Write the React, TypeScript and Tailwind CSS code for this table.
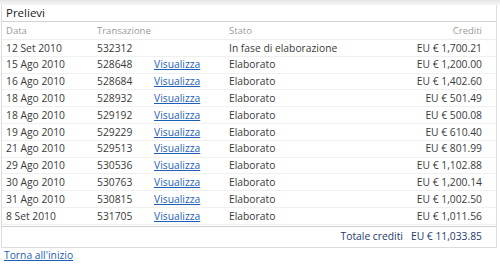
import React from "react";

const rows = [
  ["12 Set 2010", "532312", false, "In fase di elaborazione", "EU € 1,700.21"],
  ["15 Ago 2010", "528648", true, "Elaborato", "EU € 1,200.00"],
  ["16 Ago 2010", "528684", true, "Elaborato", "EU € 1,402.60"],
  ["18 Ago 2010", "528932", true, "Elaborato", "EU € 501.49"],
  ["18 Ago 2010", "529192", true, "Elaborato", "EU € 500.08"],
  ["19 Ago 2010", "529229", true, "Elaborato", "EU € 610.40"],
  ["21 Ago 2010", "529513", true, "Elaborato", "EU € 801.99"],
  ["29 Ago 2010", "530536", true, "Elaborato", "EU € 1,102.88"],
  ["30 Ago 2010", "530763", true, "Elaborato", "EU € 1,200.14"],
  ["31 Ago 2010", "530815", true, "Elaborato", "EU € 1,002.50"],
  ["8 Set 2010", "531705", true, "Elaborato", "EU € 1,011.56"],
] as const;

export default function App() {
  return (
    <div
      className="w-[500px] h-[265px] bg-white text-[10.3px] text-[#3a3a3a] overflow-hidden"
      style={{ fontFamily: '"Open Sans", "Noto Sans", sans-serif' }}
    >
      <div className="h-[5px] bg-gradient-to-b from-[#e6e6e6] to-[#f6f6f6]" />
      <div className="ml-[1px] w-[496px] border-x border-b border-[#dcdcdc]">
        <div className="h-[17px] flex items-center pl-[4px] text-[11.5px] text-[#222] border-b border-[#d4d4d4]">
          Prelievi
        </div>
        <div className="h-[18px] flex items-center pt-[1px] text-[9.5px] text-[#9a9a9a] border-b border-[#eeeeee]">
          <div className="w-[95px] pl-[4px]">Data</div>
          <div className="w-[132px]">Transazione</div>
          <div className="flex-1">Stato</div>
          <div className="pr-[14px]">Crediti</div>
        </div>
        {rows.map((r, i) => (
          <div
            key={i}
            className="h-[16.8px] flex items-center pt-[1px] border-b border-[#f0f0f0]"
          >
            <div className="w-[95px] pl-[4px]">{r[0]}</div>
            <div className="w-[57px]">{r[1]}</div>
            <div className="w-[75px]">
              {r[2] && <span className="text-[#1f5fb5] underline">Visualizza</span>}
            </div>
            <div className="flex-1">{r[3]}</div>
            <div className="pr-[14px]">{r[4]}</div>
          </div>
        ))}
        <div className="mt-[1px] border-t border-[#cfcfcf] h-[21px] flex items-center justify-end pr-[14px] text-[#1e3a6b]">
          <span className="mr-[8px]">Totale crediti</span>
          <span>EU € 11,033.85</span>
        </div>
      </div>
      <div className="pl-[4px] text-[#1f5fb5] underline">Torna all'inizio</div>
    </div>
  );
}
